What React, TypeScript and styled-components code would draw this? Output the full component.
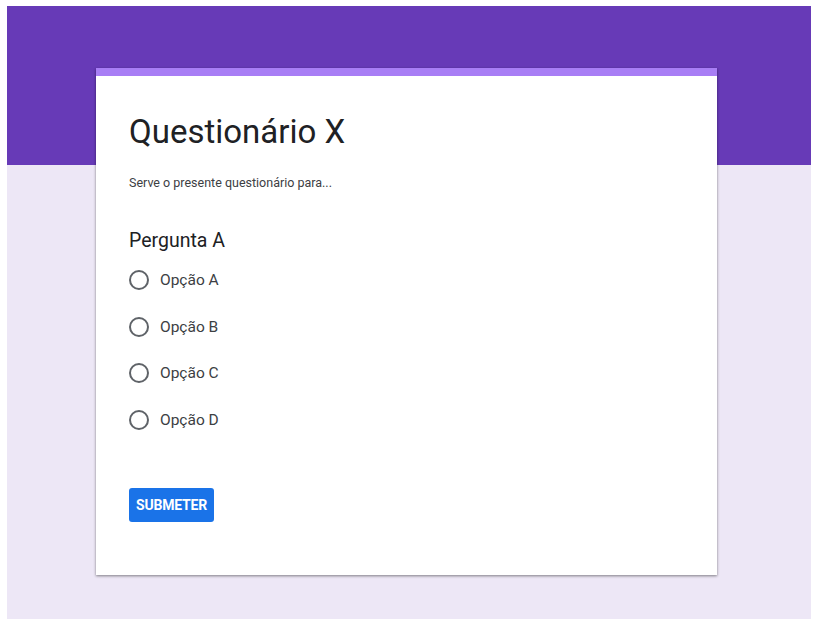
import React from 'react'
import styled, { createGlobalStyle } from 'styled-components'

const GlobalStyle = createGlobalStyle`
  html, body {
    margin: 0;
    padding: 0;
    background: #ffffff;
  }
  body {
    font-family: Roboto, "Noto Sans", Arial, sans-serif;
  }
  #root {
    padding: 6px 7px 7px 7px;
  }
`

const Page = styled.div`
  height: 613px;
  background: linear-gradient(to bottom, #673ab7 0, #673ab7 159px, #ede7f6 159px);
  padding-top: 62px;
  box-sizing: border-box;
`

const Card = styled.div`
  width: 621px;
  margin-left: 89px;
  height: 507px;
  box-sizing: border-box;
  background: #ffffff;
  border-top: 8px solid #a87ef5;
  box-shadow: 0 1px 3px rgba(0, 0, 0, 0.3), 0 1px 2px rgba(0, 0, 0, 0.2);
  padding: 34px 33px 0 33px;
  display: flex;
  flex-direction: column;
`

const Title = styled.h1`
  margin: 0;
  font-size: 33px;
  font-weight: 400;
  line-height: 44px;
  color: #202124;
`

const Description = styled.p`
  margin: 20px 0 0 0;
  font-size: 12.5px;
  line-height: 18px;
  color: #3c4043;
`

const Question = styled.h2`
  margin: 37px 0 0 0;
  font-size: 19.5px;
  font-weight: 400;
  line-height: 24px;
  color: #202124;
`

const Options = styled.div`
  display: flex;
  flex-direction: column;
  gap: 26.67px;
  margin-top: 17px;
`

const Option = styled.label`
  display: flex;
  align-items: center;
  gap: 11px;
  font-size: 15.5px;
  line-height: 20px;
  color: #3c4043;
  cursor: pointer;
`

const Radio = styled.span`
  width: 20px;
  height: 20px;
  box-sizing: border-box;
  border: 2px solid #5f6368;
  border-radius: 50%;
  flex: none;
`

const Submit = styled.button`
  margin-top: 58px;
  align-self: flex-start;
  width: 85px;
  height: 34px;
  border: none;
  border-radius: 3px;
  background: #1a73e8;
  color: #ffffff;
  font-family: Roboto, Arial, sans-serif;
  font-size: 14px;
  font-weight: 700;
  padding: 0;
  letter-spacing: -0.2px;
`

const options = ['Opção A', 'Opção B', 'Opção C', 'Opção D']

const App: React.FC = () => {
  return (
    <>
      <GlobalStyle />
      <Page>
        <Card>
          <Title>Questionário X</Title>
          <Description>Serve o presente questionário para...</Description>
          <Question>Pergunta A</Question>
          <Options>
            {options.map((o) => (
              <Option key={o}>
                <Radio />
                {o}
              </Option>
            ))}
          </Options>
          <Submit>SUBMETER</Submit>
        </Card>
      </Page>
    </>
  )
}

export default App
